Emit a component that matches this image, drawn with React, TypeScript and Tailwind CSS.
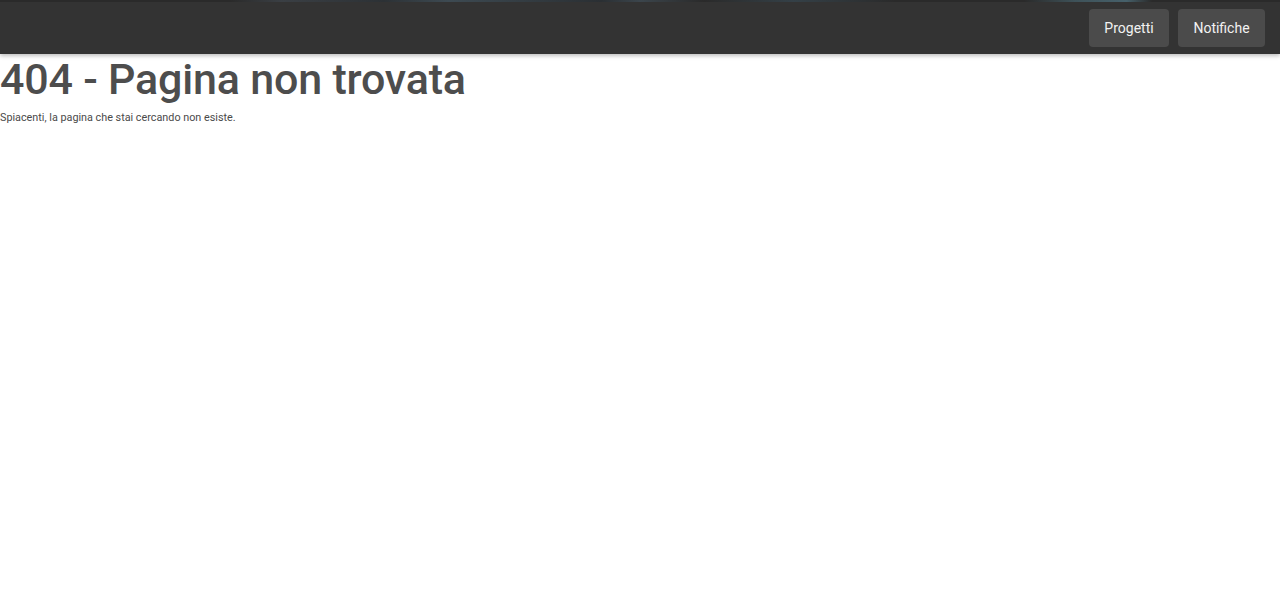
import React from "react";

export default function App() {
  return (
    <div className="min-h-[608px] w-full bg-white" style={{ fontFamily: "Roboto, 'Liberation Sans', sans-serif" }}>
      <header className="relative h-[54px] bg-[#333333] shadow-[0_2px_4px_rgba(0,0,0,0.25)] flex items-center justify-end gap-[9px] pr-[15px] pt-[2px]">
        <div className="absolute left-0 right-0 top-0 h-[2px] bg-[linear-gradient(90deg,#2a2a2a_0%,#2a2a2a_18%,#3a3f44_22%,#2c3135_30%,#3d4a52_35%,#2a2f33_47%,#3b454c_50%,#2a2a2a_55%,#344047_62%,#2a2a2a_70%,#2a2a2a_80%,#3e5259_84%,#46606a_88%,#2a2a2a_90%,#2a2a2a_100%)]" />
        <button className="h-[38px] w-[80px] rounded-[4px] bg-[#4b4b4b] text-[14px] text-[#f2f2f2]">Progetti</button>
        <button className="h-[38px] w-[87px] rounded-[4px] bg-[#4b4b4b] text-[14px] text-[#f2f2f2]">Notifiche</button>
      </header>
      <h1 className="m-0 text-[43px] font-medium leading-[50px] text-[#4d4d4d] tracking-[-0.2px]">404 - Pagina non trovata</h1>
      <p className="mt-[7px] text-[10.8px] leading-[13px] text-[#4a4a4a]">Spiacenti, la pagina che stai cercando non esiste.</p>
    </div>
  );
}
